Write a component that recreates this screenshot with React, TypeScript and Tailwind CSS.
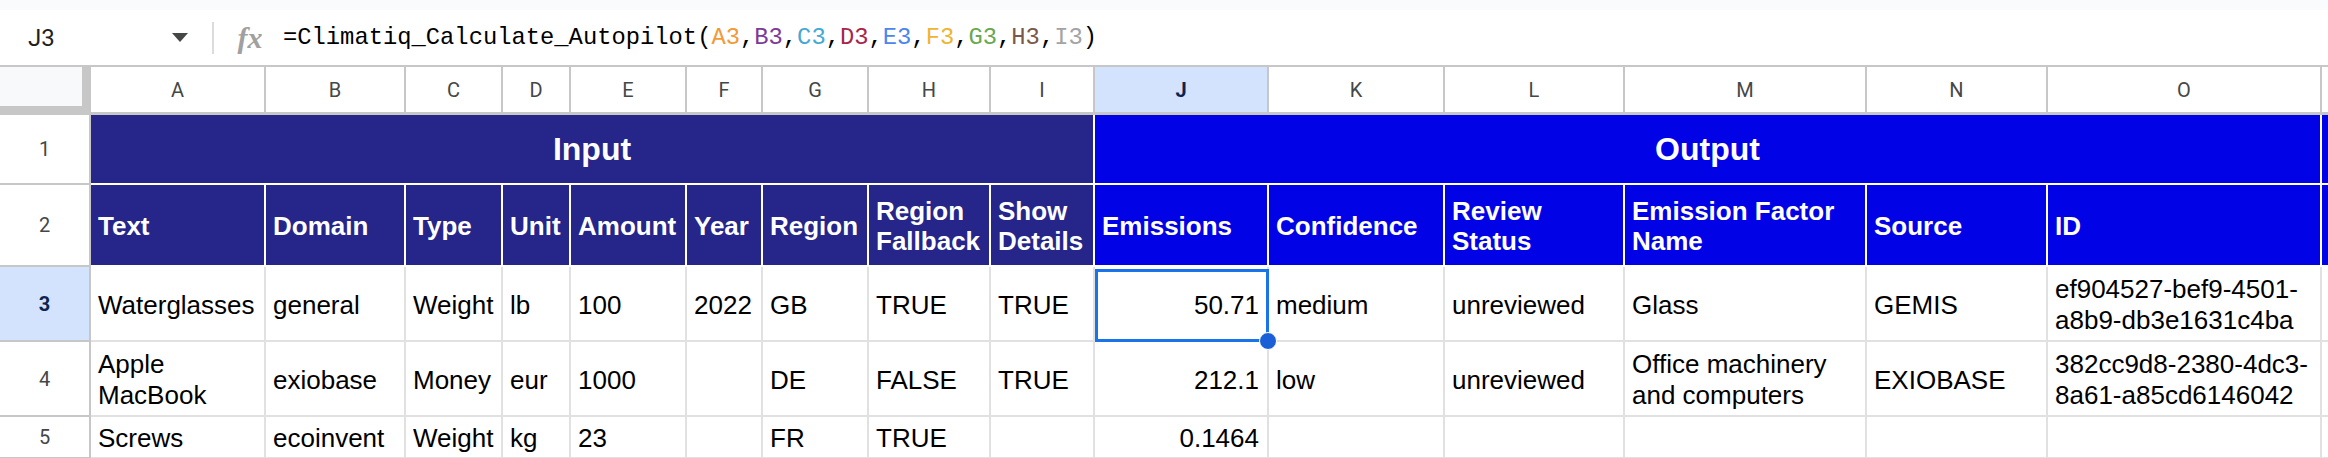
import React from "react";

const letters = ["A", "B", "C", "D", "E", "F", "G", "H", "I", "J", "K", "L", "M", "N", "O"];

const inputHeaders = ["Text", "Domain", "Type", "Unit", "Amount", "Year", "Region", "Region Fallback", "Show Details"];
const outputHeaders = ["Emissions", "Confidence", "Review Status", "Emission Factor Name", "Source", "ID"];

const data: string[][] = [
  ["Waterglasses", "general", "Weight", "lb", "100", "2022", "GB", "TRUE", "TRUE", "50.71", "medium", "unreviewed", "Glass", "GEMIS", "ef904527-bef9-4501-a8b9-db3e1631c4ba"],
  ["Apple MacBook", "exiobase", "Money", "eur", "1000", "", "DE", "FALSE", "TRUE", "212.1", "low", "unreviewed", "Office machinery and computers", "EXIOBASE", "382cc9d8-2380-4dc3-8a61-a85cd6146042"],
  ["Screws", "ecoinvent", "Weight", "kg", "23", "", "FR", "TRUE", "", "0.1464", "", "", "", "", ""],
];

function Formula() {
  const args: [string, string][] = [
    ["A3", "text-[#f29a38]"],
    ["B3", "text-[#7e3a98]"],
    ["C3", "text-[#46a9d4]"],
    ["D3", "text-[#a8264a]"],
    ["E3", "text-[#4a86f0]"],
    ["F3", "text-[#f0b431]"],
    ["G3", "text-[#6aa84f]"],
    ["H3", "text-[#7b5847]"],
    ["I3", "text-[#a3a3a3]"],
  ];
  return (
    <span className="font-['Liberation_Mono',monospace] text-[23.8px] text-[#000] whitespace-pre">
      =Climatiq_Calculate_Autopilot(
      {args.map(([a, c], i) => (
        <React.Fragment key={a}>
          <span className={c}>{a}</span>
          {i < args.length - 1 ? "," : ""}
        </React.Fragment>
      ))}
      )
    </span>
  );
}

export default function App() {
  return (
    <div className="w-[2328px] h-[458px] overflow-hidden bg-white font-['Liberation_Sans',Arial,sans-serif]">
      <div className="h-[10px] bg-[#f9fbfd]" />
      <div className="h-[57px] flex items-center border-b-2 border-[#c7c7c7] bg-white">
        <div className="w-[212px] h-full flex items-center justify-between pl-[28px] pr-[24px]">
          <span className="font-['Roboto',sans-serif] text-[24px] text-[#1f1f1f]">J3</span>
          <svg width="16" height="9" viewBox="0 0 16 9">
            <polygon points="0,0 16,0 8,9" fill="#444746" />
          </svg>
        </div>
        <div className="w-[2px] h-[32px] bg-[#dadce0]" />
        <div className="ml-[21px] w-[30px] flex items-center justify-center">
          <span className="font-['Liberation_Serif',serif] italic font-bold text-[30px] leading-none text-[#a0a0a0]">fx</span>
        </div>
        <div className="ml-[18px]">
          <Formula />
        </div>
      </div>

      <div className="grid grid-cols-[91px_175px_140px_97px_68px_116px_76px_106px_122px_104px_174px_176px_180px_242px_181px_274px_6px] grid-rows-[48px_70px_82px_75px_75px_42px]">
        {/* column header row */}
        <div className="bg-[#f8f9fa] border-r-[9px] border-b-[9px] border-[#c7c7c7]" />
        {letters.map((l) =>
          l === "J" ? (
            <div
              key={l}
              className="flex items-center justify-center bg-[#d3e3fd] border-r-2 border-b-[3px] border-[#c7c7c7] font-['Roboto',sans-serif] text-[20px] font-bold text-[#0d2350]"
            >
              {l}
            </div>
          ) : (
            <div
              key={l}
              className="flex items-center justify-center bg-white border-r-2 border-b-[3px] border-[#c7c7c7] font-['Roboto',sans-serif] text-[20px] text-[#444746]"
            >
              {l}
            </div>
          )
        )}
        <div className="bg-white border-b-[3px] border-[#c7c7c7]" />

        {/* row 1 */}
        <div className="flex items-center justify-center bg-white border-r-2 border-b-2 border-[#c7c7c7] font-['Roboto',sans-serif] text-[20px] text-[#444746]">
          1
        </div>
        <div className="col-span-9 flex items-center justify-center bg-[#25258a] border-r-2 border-b-2 border-white text-white font-bold text-[32px]">
          Input
        </div>
        <div className="col-span-6 flex items-center justify-center bg-[#0202e6] border-r-2 border-b-2 border-white text-white font-bold text-[32px]">
          Output
        </div>
        <div className="bg-[#0202e6] border-b-2 border-white" />

        {/* row 2 */}
        <div className="flex items-center justify-center bg-white border-r-2 border-b-2 border-[#c7c7c7] font-['Roboto',sans-serif] text-[20px] text-[#444746]">
          2
        </div>
        {inputHeaders.map((h) => (
          <div
            key={h}
            className="flex items-center pl-[7px] pr-[4px] pt-[1px] bg-[#25258a] border-r-2 border-b-2 border-white text-white font-bold text-[26px] leading-[30px]"
          >
            {h}
          </div>
        ))}
        {outputHeaders.map((h) => (
          <div
            key={h}
            className="flex items-center pl-[7px] pr-[4px] pt-[1px] bg-[#0202e6] border-r-2 border-b-2 border-white text-white font-bold text-[26px] leading-[30px]"
          >
            {h}
          </div>
        ))}
        <div className="bg-[#0202e6] border-b-2 border-white" />

        {/* data rows */}
        {data.map((row, ri) => (
          <React.Fragment key={ri}>
            {ri === 0 ? (
              <div className="flex items-center justify-center bg-[#d3e3fd] border-r-2 border-b-2 border-[#c7c7c7] font-['Roboto',sans-serif] text-[20px] font-bold text-[#0d2350]">
                3
              </div>
            ) : (
              <div className="flex items-center justify-center bg-white border-r-2 border-b-2 border-[#c7c7c7] font-['Roboto',sans-serif] text-[20px] text-[#444746]">
                {ri + 3}
              </div>
            )}
            {row.map((v, ci) =>
              ci === 9 ? (
                <div
                  key={ci}
                  className={
                    ri === 0
                      ? "relative z-10 flex items-center justify-end pr-[8px] pt-[3px] bg-white border-r-2 border-b-2 border-[#e1e1e1] text-black text-[26px] leading-[31px]"
                      : "relative flex items-center justify-end pr-[8px] pt-[3px] bg-white border-r-2 border-b-2 border-[#e1e1e1] text-black text-[26px] leading-[31px]"
                  }
                >
                  {v}
                  {ri === 0 && (
                    <>
                      <div className="absolute left-[0px] top-[2px] right-[-2px] bottom-[-2px] border-[3px] border-[#1a73e8]" />
                      <div className="absolute right-[-10px] bottom-[-10px] w-[18px] h-[18px] rounded-full bg-[#1a5fd6] border-[1px] border-white" />
                    </>
                  )}
                </div>
              ) : (
                <div
                  key={ci}
                  className="flex items-center pl-[7px] pr-[4px] pt-[3px] bg-white border-r-2 border-b-2 border-[#e1e1e1] text-black text-[26px] leading-[31px]"
                >
                  {v}
                </div>
              )
            )}
            <div className="bg-white border-b-2 border-[#e1e1e1]" />
          </React.Fragment>
        ))}
      </div>
    </div>
  );
}
